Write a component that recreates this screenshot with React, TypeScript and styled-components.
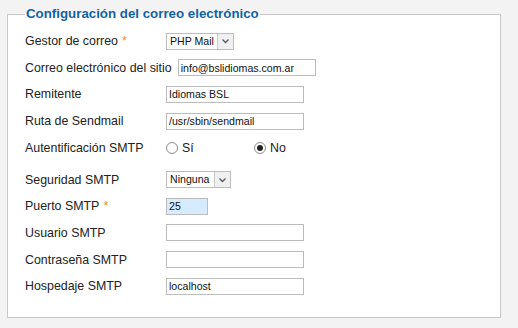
import styled, { createGlobalStyle } from "styled-components";

const GlobalStyle = createGlobalStyle`
  html, body {
    margin: 0;
    padding: 0;
    background: #f3f3f3;
  }
  body {
    font-family: "Liberation Sans", Arial, sans-serif;
  }
`;

type Field =
  | { kind: "text"; label: string; value?: string; required?: boolean; width?: number; highlight?: boolean }
  | { kind: "select"; label: string; value: string; required?: boolean; width: number }
  | { kind: "radio"; label: string; options: string[]; checked: number };

const fields: Field[] = [
  { kind: "select", label: "Gestor de correo", value: "PHP Mail", required: true, width: 68 },
  { kind: "text", label: "Correo electrónico del sitio", value: "info@bslidiomas.com.ar" },
  { kind: "text", label: "Remitente", value: "Idiomas BSL" },
  { kind: "text", label: "Ruta de Sendmail", value: "/usr/sbin/sendmail" },
  { kind: "radio", label: "Autentificación SMTP", options: ["Sí", "No"], checked: 1 },
  { kind: "select", label: "Seguridad SMTP", value: "Ninguna", width: 65 },
  { kind: "text", label: "Puerto SMTP", value: "25", required: true, width: 42, highlight: true },
  { kind: "text", label: "Usuario SMTP" },
  { kind: "text", label: "Contraseña SMTP" },
  { kind: "text", label: "Hospedaje SMTP", value: "localhost" },
];

export default function App() {
  return (
    <>
      <GlobalStyle />
      <Page>
        <Fieldset>
          <Legend>Configuración del correo electrónico</Legend>
          <List>
            {fields.map((f) => (
              <Row key={f.label} $tall={f.kind === "radio"}>
                <Label>
                  {f.label}
                  {"required" in f && f.required && <Star>*</Star>}
                </Label>
                {f.kind === "text" && (
                  <TextInput
                    readOnly
                    value={f.value ?? ""}
                    $width={f.width ?? 138}
                    $highlight={!!f.highlight}
                  />
                )}
                {f.kind === "select" && (
                  <Select $width={f.width}>
                    <SelectText>{f.value}</SelectText>
                    <SelectArrow>
                      <svg width="9" height="6" viewBox="0 0 9 6">
                        <path d="M1.5 1.5 L4.5 4.5 L7.5 1.5" fill="none" stroke="#556" strokeWidth="1.3" />
                      </svg>
                    </SelectArrow>
                  </Select>
                )}
                {f.kind === "radio" && (
                  <RadioGroup>
                    {f.options.map((o, i) => (
                      <RadioOption key={o}>
                        <RadioCircle $checked={i === f.checked} />
                        {o}
                      </RadioOption>
                    ))}
                  </RadioGroup>
                )}
              </Row>
            ))}
          </List>
        </Fieldset>
      </Page>
    </>
  );
}

const Page = styled.div`
  width: 518px;
  height: 328px;
  padding: 6px 17px 0 7px;
  box-sizing: border-box;
`;

const Fieldset = styled.fieldset`
  margin: 0;
  padding: 0 10px 0 17px;
  width: 494px;
  height: 312px;
  box-sizing: border-box;
  background: #fff;
  border: 1px solid #c8c8c8;
`;

const Legend = styled.legend`
  padding: 0 1px;
  color: #1262a6;
  font-size: 13.3px;
  font-weight: bold;
  line-height: 16px;
`;

const List = styled.div`
  display: flex;
  flex-direction: column;
  padding-top: 6px;
`;

const Row = styled.div<{ $tall: boolean }>`
  display: flex;
  align-items: center;
  height: 26.6px;
  margin-bottom: ${(p) => (p.$tall ? "5.5px" : "0")};
`;

const Label = styled.label`
  flex: 0 0 auto;
  min-width: 135px;
  margin-right: 6px;
  font-size: 12.4px;
  color: #222;
  white-space: nowrap;
`;

const Star = styled.span`
  color: #f0901c;
  margin-left: 4px;
`;

const TextInput = styled.input<{ $width: number; $highlight: boolean }>`
  width: ${(p) => p.$width}px;
  height: 17px;
  box-sizing: border-box;
  border: 1px solid #bcbcbc;
  padding: 0 2px;
  margin: 0;
  font-family: "Liberation Sans", Arial, sans-serif;
  font-size: 10.6px;
  color: #111;
  background: ${(p) => (p.$highlight ? "#d6ebff" : "#fff")};
  outline: none;
`;

const Select = styled.div<{ $width: number }>`
  display: flex;
  width: ${(p) => p.$width}px;
  height: 17px;
  box-sizing: border-box;
  border: 1px solid #bcbcbc;
  background: #fff;
`;

const SelectText = styled.span`
  flex: 1;
  padding-left: 3px;
  font-size: 10.6px;
  line-height: 15px;
  color: #111;
  white-space: nowrap;
  overflow: hidden;
`;

const SelectArrow = styled.span`
  width: 15px;
  display: flex;
  align-items: center;
  justify-content: center;
  background: #f0f0f0;
  border-left: 1px solid #c8c8c8;
`;

const RadioGroup = styled.div`
  display: flex;
  font-size: 12.4px;
  color: #222;
`;

const RadioOption = styled.span`
  display: flex;
  align-items: center;
  gap: 4px;
  width: 88px;
`;

const RadioCircle = styled.span<{ $checked: boolean }>`
  width: 12px;
  height: 12px;
  box-sizing: border-box;
  border-radius: 50%;
  border: 1px solid #8a8a8a;
  background: #fff;
  display: flex;
  align-items: center;
  justify-content: center;
  &::after {
    content: "";
    display: ${(p) => (p.$checked ? "block" : "none")};
    width: 6px;
    height: 6px;
    border-radius: 50%;
    background: #222;
  }
`;
